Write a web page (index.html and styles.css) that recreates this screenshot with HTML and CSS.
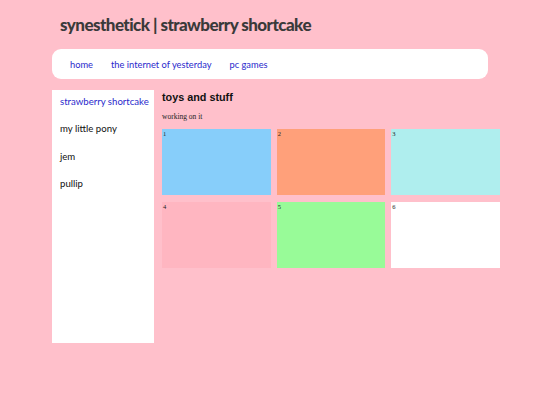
FILE: index.html
```html
<!DOCTYPE html>
<html>
<head>
<meta charset="utf-8">
<link rel="stylesheet" href="styles.css">
</head>
<body>
<div class="page">
  <h1 class="title">synesthetick | strawberry shortcake</h1>
  <nav class="nav">
    <a class="nav-link" href="#">home</a>
    <a class="nav-link" href="#">the internet of yesterday</a>
    <a class="nav-link" href="#">pc games</a>
  </nav>
  <div class="layout">
    <aside class="sidebar">
      <a class="side-link active" href="#">strawberry shortcake</a>
      <a class="side-link" href="#">my little pony</a>
      <a class="side-link" href="#">jem</a>
      <a class="side-link" href="#">pullip</a>
    </aside>
    <main class="main">
      <h2 class="heading">toys and stuff</h2>
      <p class="note">working on it</p>
      <div class="grid">
        <div class="tile sky">1</div>
        <div class="tile salmon">2</div>
        <div class="tile turq">3</div>
        <div class="tile pink">4</div>
        <div class="tile green">5</div>
        <div class="tile white">6</div>
      </div>
    </main>
  </div>
</div>
</body>
</html>
```

FILE: styles.css
```css
html, body {
  margin: 0;
  padding: 0;
  background: #ffc0cb;
}
.page {
  padding-left: 52px;
  width: 448px;
}
.title {
  margin: 0;
  padding: 15px 0 0 8px;
  height: 34px;
  box-sizing: border-box;
  font-family: Lato, sans-serif;
  font-weight: 900;
  font-size: 17px;
  line-height: 20px;
  letter-spacing: -0.55px;
  color: #3a3a3a;
}
.nav {
  margin-top: 15px;
  width: 436px;
  height: 30px;
  background: #fff;
  border-radius: 9px;
  display: flex;
  align-items: center;
  padding-left: 18px;
  box-sizing: border-box;
  gap: 18px;
}
.nav-link {
  font-family: Lato, sans-serif;
  font-size: 9.3px;
  color: #2a2acc;
  text-decoration: none;
}
.layout {
  display: flex;
  margin-top: 11px;
  gap: 8px;
}
.sidebar {
  width: 102px;
  height: 253px;
  background: #fff;
  display: flex;
  flex-direction: column;
  padding: 6px 0 0 8px;
  box-sizing: border-box;
}
.side-link {
  font-family: Lato, sans-serif;
  font-size: 9.6px;
  line-height: 12px;
  height: 27.3px;
  white-space: nowrap;
  color: #111;
  text-decoration: none;
}
.side-link.active {
  color: #2a2acc;
}
.main {
  width: 338px;
}
.heading {
  margin: 0;
  padding-top: 0;
  font-family: "Liberation Sans", Arial, sans-serif;
  font-weight: bold;
  font-size: 10.8px;
  line-height: 14px;
  color: #111;
}
.note {
  margin: 8px 0 0 0;
  font-family: "Liberation Serif", serif;
  font-size: 7.5px;
  line-height: 10px;
  color: #222;
}
.grid {
  margin-top: 7px;
  display: grid;
  grid-template-columns: repeat(3, 1fr);
  grid-auto-rows: 66px;
  column-gap: 6px;
  row-gap: 7px;
}
.tile {
  font-family: "Liberation Serif", serif;
  font-size: 6.5px;
  line-height: 8px;
  color: #222;
  padding: 1px 0 0 1px;
}
.sky { background: #87cefa; }
.salmon { background: #ffa07a; }
.turq { background: #afeeee; }
.pink { background: #ffb6c1; }
.green { background: #98fb98; }
.white { background: #ffffff; }
```
